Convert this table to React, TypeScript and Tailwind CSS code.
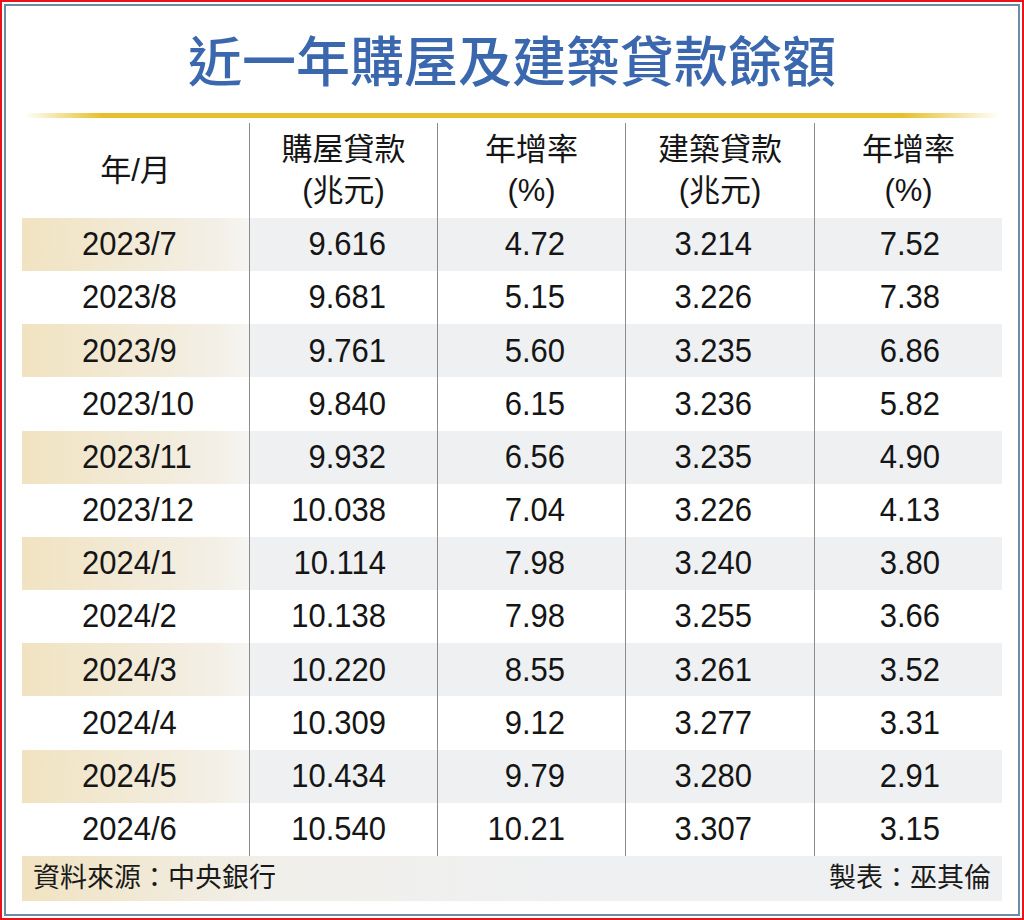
const rows = [
  ["2023/7", "9.616", "4.72", "3.214", "7.52"],
  ["2023/8", "9.681", "5.15", "3.226", "7.38"],
  ["2023/9", "9.761", "5.60", "3.235", "6.86"],
  ["2023/10", "9.840", "6.15", "3.236", "5.82"],
  ["2023/11", "9.932", "6.56", "3.235", "4.90"],
  ["2023/12", "10.038", "7.04", "3.226", "4.13"],
  ["2024/1", "10.114", "7.98", "3.240", "3.80"],
  ["2024/2", "10.138", "7.98", "3.255", "3.66"],
  ["2024/3", "10.220", "8.55", "3.261", "3.52"],
  ["2024/4", "10.309", "9.12", "3.277", "3.31"],
  ["2024/5", "10.434", "9.79", "3.280", "2.91"],
  ["2024/6", "10.540", "10.21", "3.307", "3.15"],
];

const font = { fontFamily: '"Liberation Sans", "Noto Sans CJK TC", sans-serif' };

export default function App() {
  return (
    <div className="w-[1024px] h-[920px] bg-white border-2 border-[#e8141a] p-[2px]" style={font}>
      <div className="h-full border-2 border-[#6f89a8] flex flex-col">
        {/* title */}
        <div className="h-[107px] pt-[6px] flex items-center justify-center">
          <h1 className="text-[54px] font-medium text-[#3a67ad] leading-none">
            近一年購屋及建築貸款餘額
          </h1>
        </div>

        {/* gold rule */}
        <div className="mx-[18px] h-[5px] bg-[linear-gradient(to_right,#ffffff_0%,#e6c02c_8%,#e6c02c_90%,#ffffff_100%)]" />

        <div className="mt-[5px] mx-[16px]">
          {/* header */}
          <div className="grid grid-cols-[227px_188px_188px_189px_188px] h-[95px] text-[31px] leading-[41px] text-[#151515]">
            <div className="flex items-center justify-center">年/月</div>
            {[
              ["購屋貸款", "(兆元)"],
              ["年增率", "(%)"],
              ["建築貸款", "(兆元)"],
              ["年增率", "(%)"],
            ].map(([a, b], i) => (
              <div key={i} className="border-l border-[#8c8c8c] flex flex-col items-center justify-center pb-[2px]">
                <span>{a}</span>
                <span>{b}</span>
              </div>
            ))}
          </div>

          {/* body */}
          {rows.map((r, i) => {
            const shaded = i % 2 === 0;
            return (
              <div
                key={r[0]}
                className="grid grid-cols-[227px_188px_188px_189px_188px] h-[53.17px] text-[31px] text-[#151515]"
              >
                <div
                  className={`flex items-center pl-[60px] ${
                    shaded ? "bg-[linear-gradient(to_right,#f1e3c1,#f3efe6_85%,#f6f5f2)]" : ""
                  }`}
                >
                  <span className="scale-y-[1.06]">{r[0]}</span>
                </div>
                <div className={`border-l border-[#8c8c8c] flex items-center justify-end pr-[51px] ${shaded ? "bg-[#eef0f2]" : ""}`}>
                  <span className="scale-y-[1.06]">{r[1]}</span>
                </div>
                <div className={`border-l border-[#8c8c8c] flex items-center justify-end pr-[60px] ${shaded ? "bg-[#eef0f2]" : ""}`}>
                  <span className="scale-y-[1.06]">{r[2]}</span>
                </div>
                <div className={`border-l border-[#8c8c8c] flex items-center justify-end pr-[62px] ${shaded ? "bg-[#eef0f2]" : ""}`}>
                  <span className="scale-y-[1.06]">{r[3]}</span>
                </div>
                <div className={`border-l border-[#8c8c8c] flex items-center justify-end pr-[62px] ${shaded ? "bg-[#eef0f2]" : ""}`}>
                  <span className="scale-y-[1.06]">{r[4]}</span>
                </div>
              </div>
            );
          })}

          {/* footer */}
          <div className="h-[45px] flex items-center justify-between px-[11px] text-[27px] text-[#1a1a1a] bg-[linear-gradient(to_right,#f1e3c1,#f1efea_25%,#eef0f2_60%,#eef0f2)]">
            <span>資料來源：中央銀行</span>
            <span>製表：巫其倫</span>
          </div>
        </div>
      </div>
    </div>
  );
}
